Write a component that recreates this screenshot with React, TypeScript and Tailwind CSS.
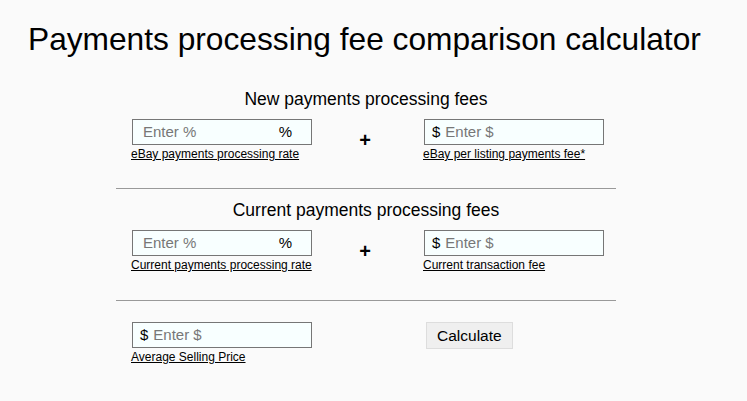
import { useState } from "react";

type FieldProps = {
  kind: "percent" | "dollar";
  label: string;
  value: string;
  onChange: (v: string) => void;
};

function Field({ kind, label, value, onChange }: FieldProps) {
  return (
    <div className="flex w-[180px] flex-col">
      <div
        className={
          kind === "dollar"
            ? "flex h-[26px] items-center border border-[#767676] bg-[#f8ffff] pl-[7px] pr-[10px] text-[15px] text-black"
            : "flex h-[26px] items-center border border-[#767676] bg-[#f8ffff] pl-[10px] pr-[10px] text-[15px] text-black"
        }
      >
        {kind === "dollar" && <span className="mr-[5px]">$</span>}
        <input
          value={value}
          onChange={(e) => onChange(e.target.value)}
          placeholder={kind === "percent" ? "Enter %" : "Enter $"}
          className="min-w-0 flex-1 bg-transparent outline-none placeholder:text-[#777]"
        />
        {kind === "percent" && <span className="mr-[9px]">%</span>}
      </div>
      <a href="#" className="-ml-[1px] mt-[2px] whitespace-nowrap text-[12px] leading-[15px] text-black underline">
        {label}
      </a>
    </div>
  );
}

export default function App() {
  const [newRate, setNewRate] = useState("");
  const [newFee, setNewFee] = useState("");
  const [curRate, setCurRate] = useState("");
  const [curFee, setCurFee] = useState("");
  const [price, setPrice] = useState("");

  return (
    <main
      className="min-h-screen bg-[#fafafa] text-black"
      style={{ fontFamily: '"Liberation Sans", Arial, sans-serif' }}
    >
      <h1 className="pl-[28px] pt-[20px] text-[31.7px] leading-[38px]">
        Payments processing fee comparison calculator
      </h1>

      <div className="ml-[116px] mt-[30px] w-[500px]">
        <h2 className="text-center text-[17.5px] leading-[22px]">New payments processing fees</h2>
        <div className="mt-[9px] flex items-start pl-[16px]">
          <Field kind="percent" label="eBay payments processing rate" value={newRate} onChange={setNewRate} />
          <div className="w-[112px] pr-[6px] pt-[11px] text-center text-[20px] font-bold leading-[20px]">+</div>
          <Field kind="dollar" label="eBay per listing payments fee*" value={newFee} onChange={setNewFee} />
        </div>

        <hr className="mt-[26px] border-t border-[#999]" />

        <h2 className="mt-[10px] text-center text-[17.5px] leading-[22px]">Current payments processing fees</h2>
        <div className="mt-[9px] flex items-start pl-[16px]">
          <Field kind="percent" label="Current payments processing rate" value={curRate} onChange={setCurRate} />
          <div className="w-[112px] pr-[6px] pt-[11px] text-center text-[20px] font-bold leading-[20px]">+</div>
          <Field kind="dollar" label="Current transaction fee" value={curFee} onChange={setCurFee} />
        </div>

        <hr className="mt-[27px] border-t border-[#999]" />

        <div className="mt-[21px] flex items-start pl-[16px]">
          <Field kind="dollar" label="Average Selling Price" value={price} onChange={setPrice} />
          <button className="ml-[114px] h-[27px] border border-[#ddd] bg-[#efefef] px-[10px] text-[15.5px]">
            Calculate
          </button>
        </div>
      </div>
    </main>
  );
}
